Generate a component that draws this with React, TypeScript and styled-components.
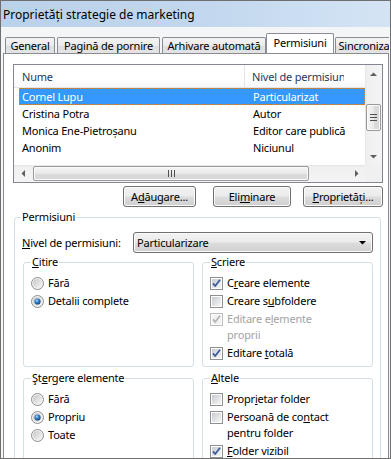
import React from "react";
import styled, { createGlobalStyle } from "styled-components";

const GlobalStyle = createGlobalStyle`
  html, body { margin: 0; padding: 0; background: #ffffff; }
  body {
    font-family: "Noto Sans", "Open Sans", sans-serif;
    font-size: 11px;
    letter-spacing: -0.2px;
    color: #000;
  }
  * { box-sizing: border-box; }
`;

const Window = styled.div`
  width: 391px;
  height: 459px;
  border: 1px solid #6f6f6f;
  background: #f4f5f6;
  overflow: hidden;
  display: flex;
  flex-direction: column;
`;

const TitleBar = styled.div`
  flex: none;
  height: 26px;
  padding-left: 2px;
  display: flex;
  align-items: center;
  font-size: 12px;
  letter-spacing: 0;
  background: linear-gradient(to right, #bad1ea 0%, #c3d8ee 55%, #d4e4f5 100%);
`;

const Body = styled.div`
  flex: 1;
  min-height: 0;
  display: flex;
  flex-direction: column;
  padding: 0 1px 0 2px;
`;

const TabStrip = styled.div`
  flex: none;
  display: flex;
  align-items: flex-end;
  height: 26px;
  overflow: hidden;
`;

const Tab = styled.div<{ $w: number; $ml: number; $active?: boolean }>`
  position: relative;
  flex: none;
  width: ${p => p.$w}px;
  margin-left: ${p => p.$ml}px;
  height: ${p => (p.$active ? 21 : 16)}px;
  margin-bottom: ${p => (p.$active ? -1 : 0)}px;
  z-index: ${p => (p.$active ? 2 : 0)};
  border: 1px solid #898c95;
  border-bottom: none;
  border-radius: 2px 2px 0 0;
  background: ${p =>
    p.$active ? "#ffffff" : "linear-gradient(#f4f4f4 0%, #ebebeb 50%, #dedede 51%, #e4e4e4 100%)"};
  display: flex;
  align-items: center;
  justify-content: center;
  padding-bottom: ${p => (p.$active ? 3 : 0)}px;
  white-space: nowrap;
`;

const Panel = styled.div`
  flex: none;
  height: 420px;
  background: #ffffff;
  border: 1px solid #898c95;
  padding: 10px 5px 0 9px;
  display: flex;
  flex-direction: column;
`;

const ListBox = styled.div`
  flex: none;
  height: 119px;
  border: 1px solid #828790;
  display: grid;
  grid-template-columns: 1fr 17px;
  grid-template-rows: 1fr 17px;
  background: #ffffff;
`;

const ListContent = styled.div`
  overflow: hidden;
  white-space: nowrap;
`;

const ListHeader = styled.div`
  display: flex;
  height: 23px;
  padding-left: 5px;
  color: #1e395b;
  background: linear-gradient(#ffffff 0%, #ffffff 60%, #f7f8f9 100%);
  border-bottom: 1px solid #e5e5e5;
`;

const HeaderCell = styled.div<{ $w: number; $pl: number; $divider?: boolean }>`
  flex: none;
  width: ${p => p.$w}px;
  display: flex;
  align-items: center;
  padding-left: ${p => p.$pl}px;
  border-right: ${p => (p.$divider ? "1px solid #e3e4e6" : "none")};
  overflow: hidden;
`;

const Row = styled.div<{ $selected?: boolean }>`
  display: grid;
  grid-template-columns: 231px 1fr;
  align-items: center;
  height: 17px;
  margin-left: 5px;
  background: ${p => (p.$selected ? "#3399ff" : "transparent")};
  color: ${p => (p.$selected ? "#ffffff" : "#000000")};
  outline: ${p => (p.$selected ? "1px dotted #c98a46" : "none")};
  outline-offset: -1px;
`;

const Cell = styled.span`
  padding-left: 3px;
  overflow: hidden;
`;

const VScroll = styled.div`
  display: flex;
  flex-direction: column;
  background: linear-gradient(to right, #e6e6e6 0, #f0f0f0 2px, #f4f4f4 100%);
`;

const HScroll = styled.div`
  display: flex;
  background: linear-gradient(#e6e6e6 0, #f0f0f0 2px, #f4f4f4 100%);
`;

const Corner = styled.div`
  background: #f0f0f0;
`;

const ArrowButton = styled.div`
  flex: none;
  width: 17px;
  height: 17px;
  display: flex;
  align-items: center;
  justify-content: center;
`;

const Track = styled.div<{ $vertical?: boolean }>`
  flex: 1;
  display: flex;
  flex-direction: ${p => (p.$vertical ? "column" : "row")};
`;

const Thumb = styled.div<{ $vertical?: boolean; $offset: number; $size: number }>`
  flex: none;
  ${p =>
    p.$vertical
      ? `margin: ${p.$offset}px 1px 0 1px; height: ${p.$size}px;`
      : `margin: 1px 0 1px ${p.$offset}px; width: ${p.$size}px;`}
  border: 1px solid #9a9a9a;
  border-radius: 2px;
  background: ${p =>
    p.$vertical
      ? "linear-gradient(to right, #f5f5f5, #e9e9e9 50%, #dcdcdc 51%, #d6d6d6)"
      : "linear-gradient(#f5f5f5, #e9e9e9 50%, #dcdcdc 51%, #d6d6d6)"};
  box-shadow: inset 0 0 0 1px #fafafa;
  display: flex;
  align-items: center;
  justify-content: center;
`;

const ButtonRow = styled.div`
  display: flex;
  justify-content: flex-end;
  margin-top: 3px;
`;

const Button = styled.div<{ $w: number; $ml: number }>`
  flex: none;
  width: ${p => p.$w}px;
  height: 21px;
  margin-left: ${p => p.$ml}px;
  border: 1px solid #707070;
  border-radius: 3px;
  background: linear-gradient(#f2f2f2 0%, #ebebeb 48%, #dddddd 52%, #cfcfcf 100%);
  box-shadow: inset 0 0 0 1px #fbfbfb;
  display: flex;
  align-items: center;
  justify-content: center;
`;

const Group = styled.fieldset<{ $pl: number; $pr: number }>`
  margin: 0;
  min-width: 0;
  border: 1px solid #d5dfe5;
  border-radius: 3px;
  padding: 0 ${p => p.$pr}px 4px ${p => p.$pl}px;
`;

const OuterGroup = styled(Group)`
  flex: 1;
  margin: 2px 2px 0 1px;
`;

const Legend = styled.legend`
  padding: 0 1px;
  line-height: 16px;
`;

const LevelRow = styled.div`
  display: flex;
  align-items: center;
  justify-content: space-between;
  height: 21px;
  margin: 7px 0 0 1px;
`;

const Select = styled.div`
  width: 240px;
  height: 21px;
  border: 1px solid #707070;
  border-radius: 3px;
  background: linear-gradient(#f2f2f2 0%, #ebebeb 48%, #dddddd 52%, #cfcfcf 100%);
  box-shadow: inset 0 0 0 1px #fbfbfb;
  display: flex;
  align-items: center;
  justify-content: space-between;
  padding: 0 6px 0 3px;
`;

const GroupGrid = styled.div`
  display: grid;
  grid-template-columns: 171px 171px;
  column-gap: 8px;
  row-gap: 3px;
  margin: 1px 0 0 2px;
`;

const OptionList = styled.div`
  display: flex;
  flex-direction: column;
  padding-top: 4px;
`;

const Option = styled.div<{ $disabled?: boolean }>`
  display: flex;
  align-items: flex-start;
  gap: 4px;
  padding: 1px 0;
  line-height: 16px;
  color: ${p => (p.$disabled ? "#a3a3a3" : "#000000")};

  svg {
    flex: none;
    margin-top: 2px;
  }
`;

const Key = styled.span`
  text-decoration: underline;
  text-underline-offset: 1px;
`;

const Grip = styled.svg`
  display: block;
`;

type Dir = "up" | "down" | "left" | "right";

const Arrow: React.FC<{ dir: Dir; color?: string }> = ({ dir, color = "#5e5e5e" }) => {
  const vertical = dir === "up" || dir === "down";
  const points = {
    up: "0,4 3.5,0.5 7,4",
    down: "0,0 7,0 3.5,3.5",
    left: "4,0 4,7 0.5,3.5",
    right: "0,0 0,7 3.5,3.5",
  }[dir];
  return (
    <svg width={vertical ? 7 : 4} height={vertical ? 4 : 7} viewBox={vertical ? "0 0 7 4" : "0 0 4 7"}>
      <polygon points={points} fill={color} />
    </svg>
  );
};

const Radio: React.FC<{ checked?: boolean }> = ({ checked }) => (
  <svg width="13" height="13" viewBox="0 0 13 13">
    <defs>
      <linearGradient id="rbFill" x1="0" y1="0" x2="1" y2="1">
        <stop offset="0" stopColor="#c4c4c4" />
        <stop offset="1" stopColor="#f8f8f8" />
      </linearGradient>
      <radialGradient id="rbDot" cx="0.4" cy="0.35" r="0.75">
        <stop offset="0" stopColor="#a6d6fd" />
        <stop offset="0.45" stopColor="#2e7bcc" />
        <stop offset="1" stopColor="#0c2f5e" />
      </radialGradient>
    </defs>
    <circle cx="6.5" cy="6.5" r="6" fill="#f3f3f3" stroke="#8d8d8d" />
    <circle cx="6.5" cy="6.5" r="4.6" fill="url(#rbFill)" />
    {checked && <circle cx="6.5" cy="6.5" r="3.1" fill="url(#rbDot)" />}
  </svg>
);

const Check: React.FC<{ checked?: boolean; disabled?: boolean }> = ({ checked, disabled }) => (
  <svg width="13" height="13" viewBox="0 0 13 13">
    <defs>
      <linearGradient id="cbFill" x1="0" y1="0" x2="1" y2="1">
        <stop offset="0" stopColor="#c8ccd2" />
        <stop offset="1" stopColor="#f6f6f6" />
      </linearGradient>
    </defs>
    <rect x="0.5" y="0.5" width="12" height="12" fill="#ffffff" stroke={disabled ? "#bcbcbc" : "#8e8f8f"} />
    <rect x="2" y="2" width="9" height="9" fill={disabled ? "#f2f2f2" : "url(#cbFill)"} />
    {checked && (
      <path
        d="M3 6.4 L5.2 9 L10 2.8"
        fill="none"
        stroke={disabled ? "#b4b4b4" : "#3b5c9c"}
        strokeWidth="1.8"
        strokeLinejoin="round"
      />
    )}
  </svg>
);

const rows = [
  { name: "Cornel Lupu", level: "Particularizat", selected: true },
  { name: "Cristina Potra", level: "Autor" },
  { name: "Monica Ene-Pietroșanu", level: "Editor care publică" },
  { name: "Anonim", level: "Niciunul" },
];

const App: React.FC = () => {
  return (
    <>
      <GlobalStyle />
      <Window>
        <TitleBar>Proprietăți strategie de marketing</TitleBar>
        <Body>
          <TabStrip>
            <Tab $w={50} $ml={2}>General</Tab>
            <Tab $w={103} $ml={2}>Pagină de pornire</Tab>
            <Tab $w={104} $ml={2}>Arhivare automată</Tab>
            <Tab $w={68} $ml={0} $active>Permisiuni</Tab>
            <Tab $w={68} $ml={1}>Sincronizare</Tab>
          </TabStrip>
          <Panel>
            <ListBox>
              <ListContent>
                <ListHeader>
                  <HeaderCell $w={226} $pl={3} $divider>Nume</HeaderCell>
                  <HeaderCell $w={99} $pl={7}>Nivel de permisiune</HeaderCell>
                </ListHeader>
                {rows.map(r => (
                  <Row key={r.name} $selected={r.selected}>
                    <Cell>{r.name}</Cell>
                    <Cell>{r.level}</Cell>
                  </Row>
                ))}
              </ListContent>
              <VScroll>
                <ArrowButton><Arrow dir="up" /></ArrowButton>
                <Track $vertical>
                  <Thumb $vertical $offset={22} $size={27}>
                    <Grip width="7" height="7" viewBox="0 0 7 7">
                      <path d="M0 0.5 H7 M0 3.5 H7 M0 6.5 H7" stroke="#4f4f4f" strokeWidth="1" />
                    </Grip>
                  </Thumb>
                </Track>
                <ArrowButton><Arrow dir="down" /></ArrowButton>
              </VScroll>
              <HScroll>
                <ArrowButton><Arrow dir="left" /></ArrowButton>
                <Track>
                  <Thumb $offset={2} $size={276}>
                    <Grip width="7" height="7" viewBox="0 0 7 7">
                      <path d="M0.5 0 V7 M3.5 0 V7 M6.5 0 V7" stroke="#4f4f4f" strokeWidth="1" />
                    </Grip>
                  </Thumb>
                </Track>
                <ArrowButton><Arrow dir="right" /></ArrowButton>
              </HScroll>
              <Corner />
            </ListBox>

            <ButtonRow>
              <Button $w={73} $ml={0}>A<Key>d</Key>ăugare...</Button>
              <Button $w={78} $ml={17}>Eli<Key>m</Key>inare</Button>
              <Button $w={80} $ml={12}><Key>P</Key>roprietăți...</Button>
            </ButtonRow>

            <OuterGroup $pl={6} $pr={7}>
              <Legend>Permisiuni</Legend>
              <LevelRow>
                <span><Key>N</Key>ivel de permisiuni:</span>
                <Select>
                  <span>Particularizare</span>
                  <Arrow dir="down" color="#000000" />
                </Select>
              </LevelRow>

              <GroupGrid>
                <Group $pl={7} $pr={7}>
                  <Legend><Key>C</Key>itire</Legend>
                  <OptionList>
                    <Option><Radio /><span>Fără</span></Option>
                    <Option><Radio checked /><span>Detalii complete</span></Option>
                  </OptionList>
                </Group>

                <Group $pl={7} $pr={7}>
                  <Legend><Key>S</Key>criere</Legend>
                  <OptionList>
                    <Option><Check checked /><span>C<Key>r</Key>eare elemente</span></Option>
                    <Option><Check /><span>Creare s<Key>u</Key>bfoldere</span></Option>
                    <Option $disabled>
                      <Check checked disabled />
                      <span>Editare e<Key>l</Key>emente<br />proprii</span>
                    </Option>
                    <Option><Check checked /><span>Editare <Key>t</Key>otală</span></Option>
                  </OptionList>
                </Group>

                <Group $pl={7} $pr={7}>
                  <Legend>Şt<Key>e</Key>rgere elemente</Legend>
                  <OptionList>
                    <Option><Radio /><span>Fără</span></Option>
                    <Option><Radio checked /><span>Propriu</span></Option>
                    <Option><Radio /><span>Toate</span></Option>
                  </OptionList>
                </Group>

                <Group $pl={7} $pr={7}>
                  <Legend><Key>A</Key>ltele</Legend>
                  <OptionList>
                    <Option><Check /><span>Propr<Key>i</Key>etar folder</span></Option>
                    <Option>
                      <Check />
                      <span>Persoană de co<Key>n</Key>tact<br />pentru folder</span>
                    </Option>
                    <Option><Check checked /><span><Key>F</Key>older vizibil</span></Option>
                  </OptionList>
                </Group>
              </GroupGrid>
            </OuterGroup>
          </Panel>
        </Body>
      </Window>
    </>
  );
};

export default App;
